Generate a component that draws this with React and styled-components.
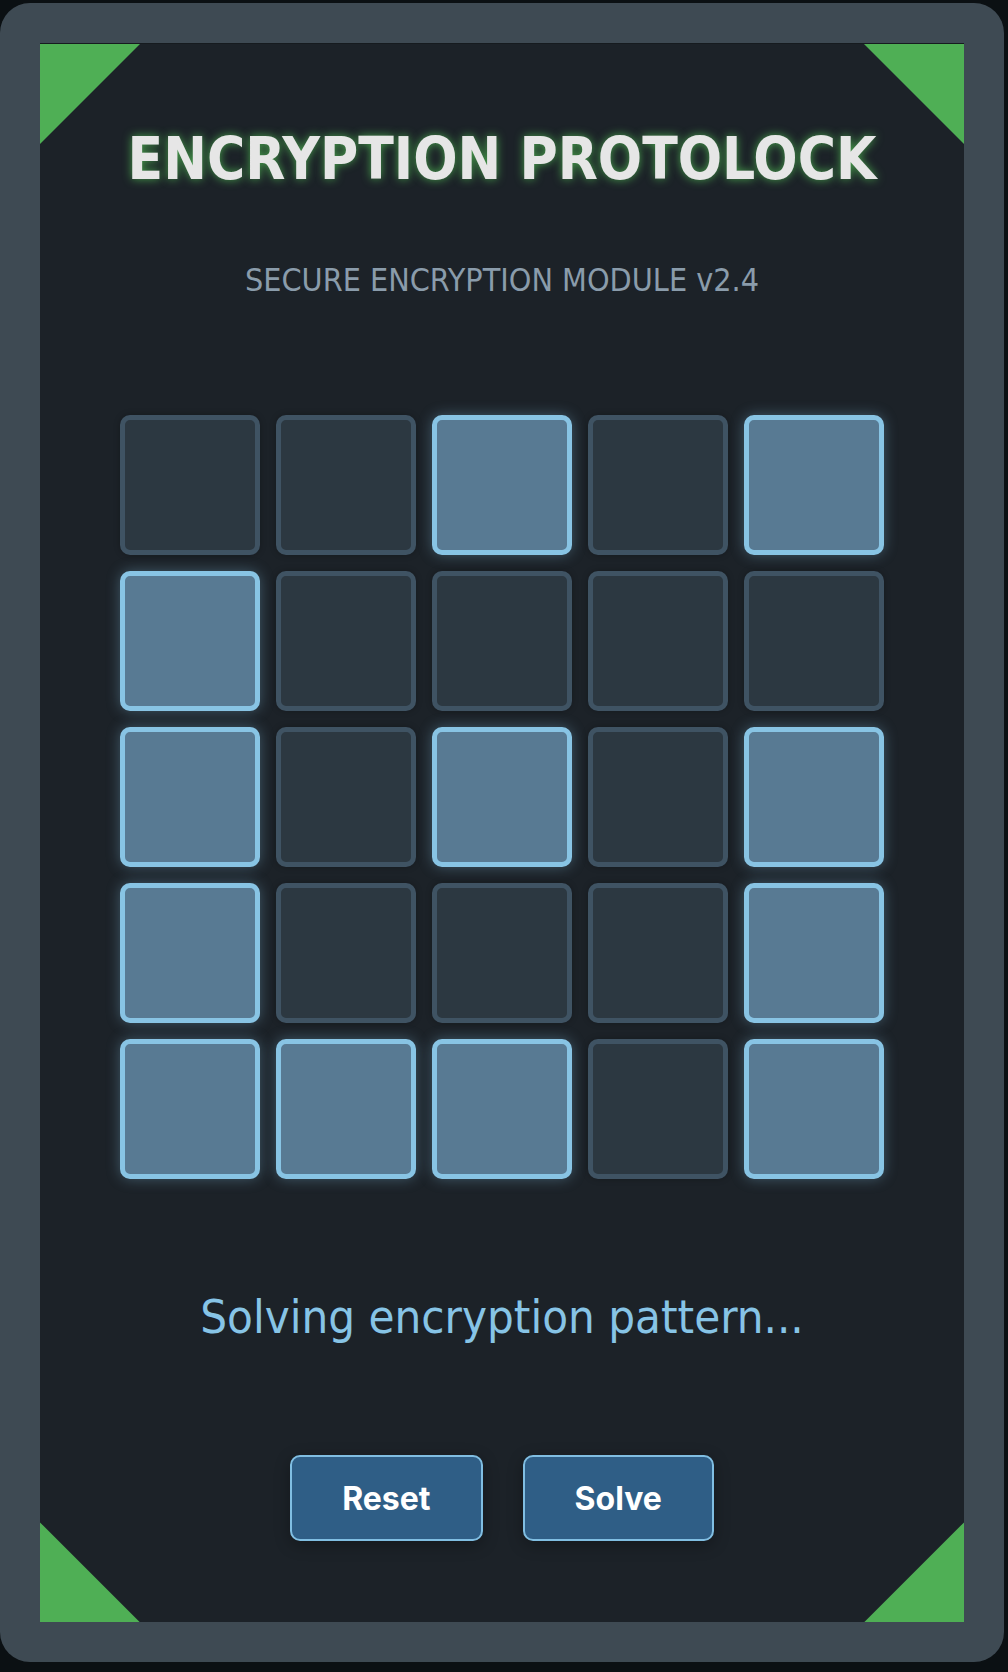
import React, { useState } from 'react';
import styled, { createGlobalStyle } from 'styled-components';

const GlobalStyle = createGlobalStyle`
    html, body {
        margin: 0;
        padding: 0;
        background-color: #0b1013;
    }
    * {
        box-sizing: border-box;
    }
`;

const START_PATTERN = [
    [0, 0, 1, 0, 1],
    [1, 0, 0, 0, 0],
    [1, 0, 1, 0, 1],
    [1, 0, 0, 0, 1],
    [1, 1, 1, 0, 1],
];

export default function App() {
    const [grid, setGrid] = useState(START_PATTERN);

    const toggle = (r, c) => {
        setGrid(grid.map((row, ri) =>
            row.map((v, ci) => (ri === r && ci === c ? (v ? 0 : 1) : v))
        ));
    };

    const handleReset = () => setGrid(START_PATTERN);
    const handleSolve = () => setGrid(grid.map((row) => row.map(() => 1)));

    return (
        <Page>
            <GlobalStyle />
            <Frame>
                <Panel>
                    <Corner pos="tl" />
                    <Corner pos="tr" />
                    <Corner pos="bl" />
                    <Corner pos="br" />
                    <Title>ENCRYPTION PROTOLOCK</Title>
                    <Subtitle>SECURE ENCRYPTION MODULE v2.4</Subtitle>
                    <Grid>
                        {grid.map((row, r) =>
                            row.map((v, c) => (
                                <Tile key={`${r}-${c}`} lit={v === 1} onClick={() => toggle(r, c)} />
                            ))
                        )}
                    </Grid>
                    <Status>Solving encryption pattern...</Status>
                    <Actions>
                        <Button onClick={handleReset}>Reset</Button>
                        <Button onClick={handleSolve}>Solve</Button>
                    </Actions>
                </Panel>
            </Frame>
        </Page>
    );
}

const Page = styled.div`
    padding-top: 3px;
    font-family: "DejaVu Sans Condensed", "DejaVu Sans", sans-serif;
`;

const Frame = styled.div`
    width: 1004px;
    padding: 40px;
    background-color: #3e4a53;
    border-radius: 30px;
`;

const Panel = styled.div`
    position: relative;
    background-color: #1c2228;
    border-top: 1px solid #161b1f;
    padding: 81px 0 81px;
    display: flex;
    flex-direction: column;
    align-items: center;
    overflow: hidden;
`;

const corners = {
    tl: 'top: 0; left: 0; clip-path: polygon(0 0, 100% 0, 0 100%);',
    tr: 'top: 0; right: 0; clip-path: polygon(0 0, 100% 0, 100% 100%);',
    bl: 'bottom: 0; left: 0; clip-path: polygon(0 0, 100% 100%, 0 100%);',
    br: 'bottom: 0; right: 0; clip-path: polygon(100% 0, 100% 100%, 0 100%);',
};

const Corner = styled.div`
    position: absolute;
    width: 100px;
    height: 100px;
    background-color: #4faf55;
    ${({ pos }) => corners[pos]}
`;

const Title = styled.h1`
    margin: 0;
    font-size: 58px;
    line-height: 1.2;
    font-weight: bold;
    color: #e6e6e6;
    text-shadow: 0 0 10px rgba(76, 175, 80, 0.9);
`;

const Subtitle = styled.div`
    margin-top: 66px;
    font-size: 32px;
    line-height: 1.2;
    color: #8a9cab;
`;

const Grid = styled.div`
    margin-top: 116px;
    display: grid;
    grid-template-columns: repeat(5, 140px);
    grid-auto-rows: 140px;
    gap: 16px;
`;

const Tile = styled.div`
    border-radius: 10px;
    cursor: pointer;
    border: 5px solid ${({ lit }) => (lit ? '#88c4e4' : '#3f5363')};
    background-color: ${({ lit }) => (lit ? '#587a93' : '#2c3841')};
    box-shadow: ${({ lit }) =>
        lit ? '0 0 14px rgba(136, 196, 228, 0.35)' : '0 0 6px rgba(0, 0, 0, 0.25)'};
`;

const Status = styled.div`
    margin-top: 110px;
    font-size: 47px;
    line-height: 1.2;
    color: #87c4e6;
`;

const Actions = styled.div`
    margin-top: 110px;
    display: flex;
    gap: 40px;
`;

const Button = styled.button`
    height: 86px;
    padding: 0 50px;
    background-color: #2f5e86;
    border: 2px solid #80bee2;
    border-radius: 10px;
    color: #ffffff;
    font-family: Inter, "Liberation Sans", sans-serif;
    font-size: 32px;
    font-weight: 700;
    cursor: pointer;
    box-shadow: 0 4px 16px rgba(0, 0, 0, 0.3);
`;
